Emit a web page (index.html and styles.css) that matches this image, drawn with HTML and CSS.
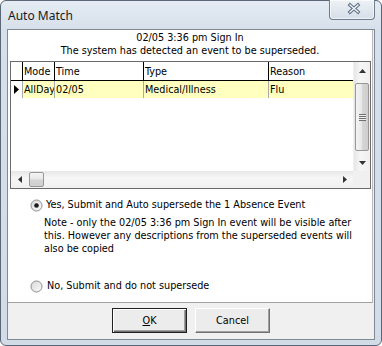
FILE: index.html
```html
<!DOCTYPE html>
<html>
<head>
<meta charset="utf-8">
<link rel="stylesheet" href="styles.css">
</head>
<body>
<div class="window">
  <div class="titlebar"><span class="title">Auto Match</span></div>
  <div class="close">
    <svg width="44" height="18" viewBox="0 0 44 18">
      <path d="M20 5 L28 12 M28 5 L20 12" stroke="#5f7188" stroke-width="3.4" stroke-linecap="square" fill="none"/>
      <path d="M20 5 L28 12 M28 5 L20 12" stroke="#f4f7fa" stroke-width="1.3" stroke-linecap="square" fill="none"/>
    </svg>
  </div>
  <div class="client">
    <div class="panel">
      <div class="heading">
        <div>02/05 3:36 pm Sign In</div>
        <div>The system has detected an event to be superseded.</div>
      </div>
      <div class="grid">
        <div class="gridmain">
          <div class="row head">
            <div class="cell ind"></div>
            <div class="cell c-mode">Mode</div>
            <div class="cell c-time">Time</div>
            <div class="cell c-type">Type</div>
            <div class="cell c-reason">Reason</div>
          </div>
          <div class="row data">
            <div class="cell ind"><svg width="6" height="9" viewBox="0 0 6 9"><path d="M0 0 L5 4.5 L0 9 Z" fill="#000"/></svg></div>
            <div class="cell c-mode">AllDay</div>
            <div class="cell c-time">02/05</div>
            <div class="cell c-type">Medical/Illness</div>
            <div class="cell c-reason">Flu</div>
          </div>
        </div>
        <div class="vscroll">
          <div class="sbtn"><svg width="7" height="4" viewBox="0 0 7 4"><path d="M0 4 L3.5 0 L7 4 Z" fill="#333"/></svg></div>
          <div class="vthumb"><span class="grip"></span></div>
          <div class="vfill"></div>
          <div class="sbtn"><svg width="7" height="4" viewBox="0 0 7 4"><path d="M0 0 L3.5 4 L7 0 Z" fill="#333"/></svg></div>
        </div>
        <div class="hscroll">
          <div class="sbtn h"><svg width="4" height="7" viewBox="0 0 4 7"><path d="M4 0 L0 3.5 L4 7 Z" fill="#333"/></svg></div>
          <div class="hthumb"></div>
          <div class="hfill"></div>
          <div class="sbtn h"><svg width="4" height="7" viewBox="0 0 4 7"><path d="M0 0 L4 3.5 L0 7 Z" fill="#333"/></svg></div>
        </div>
        <div class="corner"></div>
      </div>
      <div class="option opt1">
        <svg class="radio" width="13" height="13" viewBox="0 0 13 13">
          <defs><linearGradient id="rg" x1="0" y1="0" x2="1" y2="1"><stop offset="0" stop-color="#d8d8d8"/><stop offset="1" stop-color="#fbfbfb"/></linearGradient></defs>
          <circle cx="6.5" cy="6.5" r="5.5" fill="url(#rg)" stroke="#8c8c8c"/>
          <circle cx="6.5" cy="6.5" r="2.3" fill="#1a1a1a"/>
        </svg>
        <span>Yes, Submit and Auto supersede the 1 Absence Event</span>
      </div>
      <div class="note">Note - only the 02/05 3:36 pm Sign In event will be visible after<br>this. However any descriptions from the superseded events will<br>also be copied</div>
      <div class="option opt2">
        <svg class="radio" width="13" height="13" viewBox="0 0 13 13">
          <defs><linearGradient id="rg2" x1="0" y1="0" x2="1" y2="1"><stop offset="0" stop-color="#d8d8d8"/><stop offset="1" stop-color="#fbfbfb"/></linearGradient></defs>
          <circle cx="6.5" cy="6.5" r="5.5" fill="url(#rg2)" stroke="#8c8c8c"/>
        </svg>
        <span>No, Submit and do not supersede</span>
      </div>
    </div>
    <div class="buttons">
      <button class="btn default"><u>O</u>K</button>
      <button class="btn">Cancel</button>
    </div>
  </div>
</div>
</body>
</html>
```

FILE: styles.css
```css
* { box-sizing: border-box; }
html, body { margin: 0; padding: 0; background: #ffffff; }
body {
  width: 382px;
  height: 346px;
  overflow: hidden;
  font-family: "DejaVu Sans", "Liberation Sans", sans-serif;
  font-stretch: condensed;
  font-size: 10.75px;
  color: #000;
}
.window {
  position: relative;
  width: 382px;
  height: 346px;
  border: 1px solid #5b6777;
  border-radius: 6px;
  background: linear-gradient(to bottom, #e4ebf3 0px, #d6e0ea 30px, #d2dce7 100%);
  padding: 0 6px 5px 6px;
  display: flex;
  flex-direction: column;
}
.titlebar {
  height: 28px;
  display: flex;
  align-items: center;
  padding-left: 1px;
}
.title {
  font-family: "Noto Sans", "Open Sans", sans-serif;
  font-stretch: normal;
  font-size: 12px;
  color: #1a1a1a;
  margin-top: 1px;
}
.close {
  position: absolute;
  top: -1px;
  right: 6px;
  width: 46px;
  height: 20px;
  border: 1px solid #6e7d90;
  border-top: none;
  border-radius: 0 0 4px 4px;
  background: linear-gradient(to bottom, #eef2f6, #d5dee8);
  box-shadow: inset 0 0 0 1px rgba(255,255,255,0.6);
}
.close svg { display: block; }
.client {
  flex: 1;
  border: 1px solid #7f8a96;
  background: #f0f0f0;
  display: flex;
  flex-direction: column;
}
.panel {
  height: 273px;
  background: #ffffff;
  border-right: 1px solid #b9b9b9;
  border-bottom: 1px solid #a0a0a0;
  margin-right: 1px;
  display: flex;
  flex-direction: column;
}
.heading {
  padding-top: 1px;
  text-align: center;
  line-height: 13px;
}
.grid {
  margin: 4px 1px 0 2px;
  height: 128px;
  border: 1px solid #6a6a6a;
  display: grid;
  grid-template-columns: 1fr 17px;
  grid-template-rows: 1fr 17px;
  background: #fff;
}
.gridmain { overflow: hidden; }
.row { display: flex; }
.row.head { height: 19px; border-bottom: 1px solid #000; }
.row.data { height: 17px; background: #ffffbf; }
.cell {
  overflow: hidden;
  white-space: nowrap;
  padding-left: 1px;
  display: flex;
  align-items: center;
}
.head .cell { border-right: 1px solid #000; background: #fff; }
.data .cell { border-right: 1px solid #a9a9a9; }
.cell.ind { width: 12px; padding-left: 3px; }
.head .cell.ind { background: #fff; }
.data .cell.ind { background: #fff; }
.cell.ind svg { display: block; }
.c-mode { width: 32px; }
.c-time { width: 89px; }
.c-type { width: 125px; }
.c-reason { width: 84px; }
.head .c-reason, .data .c-reason { border-right: none; }
.vscroll {
  display: flex;
  flex-direction: column;
  background: linear-gradient(to right, #e6e6e6, #f6f6f6 40%, #f0f0f0);
  border-left: 1px solid #f0f0f0;
}
.sbtn {
  height: 17px;
  display: flex;
  align-items: center;
  justify-content: center;
  flex: none;
}
.sbtn.h { width: 17px; height: auto; }
.sbtn svg { display: block; }
.vthumb {
  margin: 4px 1px 0 1px;
  height: 68px;
  border: 1px solid #979797;
  border-radius: 2px;
  background: linear-gradient(to right, #f4f4f4, #e8e8e8 45%, #d4d4d4 55%, #cfcfcf);
  display: flex;
  align-items: center;
  justify-content: center;
}
.grip {
  width: 7px;
  height: 7px;
  background: repeating-linear-gradient(to bottom, #6f6f6f 0 1px, #f0f0f0 1px 2px);
}
.vfill { flex: 1; }
.hscroll {
  display: flex;
  background: linear-gradient(to bottom, #e6e6e6, #f6f6f6 40%, #f0f0f0);
}
.hthumb {
  margin: 1px 0 1px 1px;
  width: 15px;
  border: 1px solid #979797;
  border-radius: 2px;
  background: linear-gradient(to bottom, #f4f4f4, #e8e8e8 45%, #d4d4d4 55%, #cfcfcf);
}
.hfill { flex: 1; }
.corner { background: #f0f0f0; }
.option {
  display: flex;
  align-items: center;
  height: 14px;
  line-height: 14px;
  padding-left: 22px;
}
.option .radio { display: block; margin-right: 3px; flex: none; }
.opt1 { margin-top: 9px; }
.opt2 { margin-top: 24px; }
.opt2 .radio { margin-right: 4px; }
.note {
  margin-top: 4px;
  padding-left: 36px;
  line-height: 13px;
  white-space: nowrap;
}
.buttons {
  flex: 1;
  display: flex;
  justify-content: center;
  gap: 8px;
  padding-top: 5px;
}
.btn {
  width: 75px;
  height: 25px;
  font-family: inherit;
  font-stretch: inherit;
  font-size: inherit;
  color: #000;
  background: #ececec;
  border: 1px solid;
  border-color: #ffffff #707070 #707070 #ffffff;
  box-shadow: inset -1px -1px 0 #a0a0a0;
  padding: 0;
  margin: 0;
}
.btn.default {
  border: 1px solid #202020;
  box-shadow: inset 1px 1px 0 #ffffff, inset -1px -1px 0 #707070, inset -2px -2px 0 #a0a0a0;
}
.btn u { text-decoration: underline; }
```
